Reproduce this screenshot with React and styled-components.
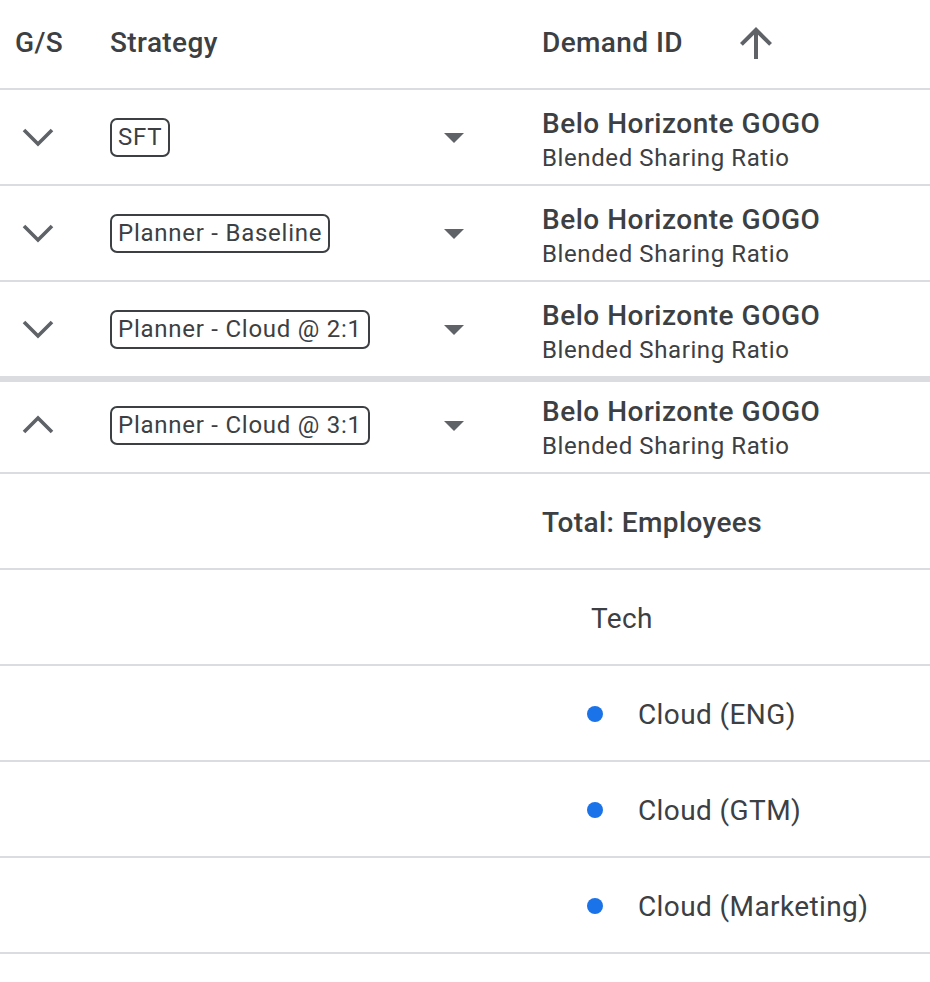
import React from "react";
import styled, { createGlobalStyle } from "styled-components";

const Global = createGlobalStyle`
  html, body { margin: 0; padding: 0; background: #fff; }
  body { font-family: Roboto, "Noto Sans", Arial, sans-serif; color: #3c4043; }
`;

const Table = styled.div`
  width: 930px;
  display: grid;
  grid-template-columns: 110px 432px 1fr;
`;

const HeaderRow = styled.div`
  display: contents;
`;

const HeadCell = styled.div`
  height: 85px;
  padding-bottom: 3px;
  border-bottom: 2px solid #dadce0;
  display: flex;
  align-items: center;
  padding-left: ${(p) => p.$pad || 0}px;
  font-size: 28px;
  font-weight: 500;
  letter-spacing: 0.4px;
  color: #3c4043;
`;

const SortIcon = styled.svg`
  width: 48px;
  height: 48px;
  margin-left: 49px;
  fill: #5f6368;
`;

const Cell = styled.div`
  height: 94px;
  border-bottom: 2px solid #dadce0;
  display: flex;
  align-items: center;
  padding-left: ${(p) => p.$pad || 0}px;
  box-shadow: ${(p) => (p.$band ? "inset 0 4px 0 #dadce0" : "none")};
`;

const Chevron = styled.svg`
  width: 32px;
  height: 20px;
  margin-left: 22px;
  fill: none;
  stroke: #5f6368;
  stroke-width: 3.6px;
`;

const StrategyBox = styled.div`
  flex: 1;
  display: flex;
  align-items: center;
  justify-content: space-between;
  padding-right: 64px;
`;

const Chip = styled.span`
  display: inline-flex;
  align-items: center;
  height: 39px;
  box-sizing: border-box;
  padding: 0 6px;
  border: 2px solid #3c4043;
  border-radius: 7px;
  font-size: 24px;
  letter-spacing: 0.75px;
  color: #3c4043;
  white-space: nowrap;
`;

const DropIcon = styled.svg`
  width: 48px;
  height: 48px;
  fill: #5f6368;
`;

const DemandBlock = styled.div`
  display: flex;
  flex-direction: column;
  padding-top: 6px;
`;

const Title = styled.div`
  font-size: 28px;
  font-weight: 500;
  line-height: 36px;
  letter-spacing: 0.5px;
  color: #3c4043;
`;

const Subtitle = styled.div`
  font-size: 24px;
  line-height: 32px;
  letter-spacing: 0.6px;
  color: #3c4043;
`;

const DetailText = styled.div`
  font-size: 28px;
  font-weight: ${(p) => (p.$bold ? 500 : 400)};
  letter-spacing: 0.4px;
  color: #3c4043;
  padding-left: ${(p) => p.$indent || 0}px;
  padding-top: 2px;
  display: flex;
  align-items: center;
`;

const Dot = styled.span`
  width: 16px;
  height: 16px;
  border-radius: 50%;
  background: #1a73e8;
  margin-left: 45px;
  margin-right: 35px;
  flex: none;
`;

const ExpandMore = () => (
  <Chevron viewBox="0 0 32 20">
    <polyline points="2,3 16,17 30,3" />
  </Chevron>
);

const ExpandLess = () => (
  <Chevron viewBox="0 0 32 20">
    <polyline points="2,17 16,3 30,17" />
  </Chevron>
);

const ArrowDrop = () => (
  <DropIcon viewBox="0 0 24 24">
    <path d="M7 10l5 5 5-5z" />
  </DropIcon>
);

const rows = [
  { strategy: "SFT", open: false },
  { strategy: "Planner - Baseline", open: false },
  { strategy: "Planner - Cloud @ 2:1", open: false },
  { strategy: "Planner - Cloud @ 3:1", open: true },
];

const details = [
  { text: "Total: Employees", bold: true, indent: 0 },
  { text: "Tech", indent: 49 },
  { text: "Cloud (ENG)", dot: true },
  { text: "Cloud (GTM)", dot: true },
  { text: "Cloud (Marketing)", dot: true },
];

export default function App() {
  return (
    <>
      <Global />
      <Table>
        <HeaderRow>
          <HeadCell $pad={15}>G/S</HeadCell>
          <HeadCell>Strategy</HeadCell>
          <HeadCell>
            Demand ID
            <SortIcon viewBox="0 0 24 24">
              <path d="M4 12l1.41 1.41L11 7.83V20h2V7.83l5.58 5.59L20 12l-8-8-8 8z" />
            </SortIcon>
          </HeadCell>
        </HeaderRow>
        {rows.map((r) => (
          <React.Fragment key={r.strategy}>
            <Cell $band={r.open}>{r.open ? <ExpandLess /> : <ExpandMore />}</Cell>
            <Cell $band={r.open}>
              <StrategyBox>
                <Chip>{r.strategy}</Chip>
                <ArrowDrop />
              </StrategyBox>
            </Cell>
            <Cell $band={r.open}>
              <DemandBlock>
                <Title>Belo Horizonte GOGO</Title>
                <Subtitle>Blended Sharing Ratio</Subtitle>
              </DemandBlock>
            </Cell>
          </React.Fragment>
        ))}
        {details.map((d) => (
          <React.Fragment key={d.text}>
            <Cell />
            <Cell />
            <Cell>
              <DetailText $bold={d.bold} $indent={d.indent}>
                {d.dot && <Dot />}
                {d.text}
              </DetailText>
            </Cell>
          </React.Fragment>
        ))}
      </Table>
    </>
  );
}
